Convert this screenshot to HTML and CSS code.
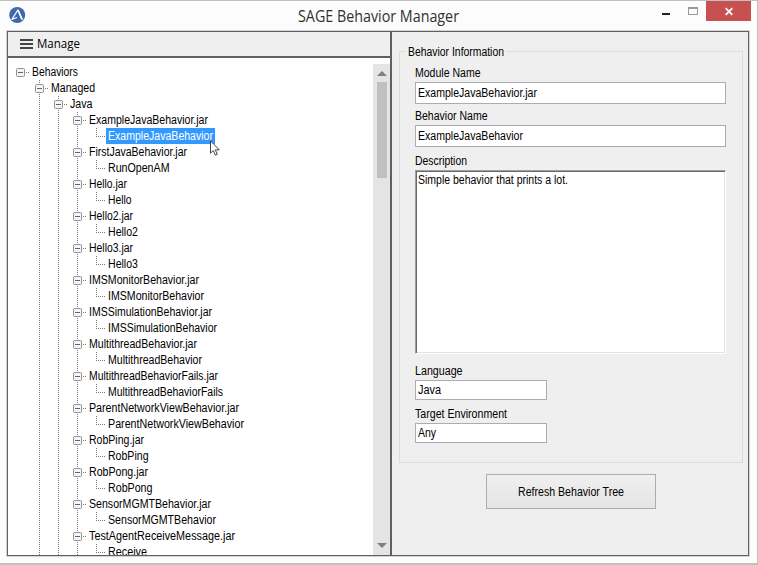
FILE: index.html
```html
<!DOCTYPE html>
<html lang="en">
<head>
<meta charset="utf-8">
<title>SAGE Behavior Manager</title>
<link rel="stylesheet" href="styles.css">
</head>
<body>
<div class="window">
  <header class="titlebar">
    <svg class="logo" width="17" height="17" viewBox="0 0 17 17"><circle cx="8.2" cy="8" r="8" fill="#3f68b0"/><path d="M2.7 12.6 8.8 3.2 13.5 12.4M2.7 12.6 8 10.4" fill="none" stroke="#fff" stroke-width="1.1"/><path d="M8.4 3h1.5l3.9 9.4h-1.8z" fill="#fff"/></svg>
    <h1 class="title"><span data-w="161">SAGE Behavior Manager</span></h1>
    <div class="controls">
      <svg width="90" height="21" viewBox="0 0 90 21"><path d="M0 13h8v2H0z" fill="#222"/><path d="M26 7h10v8H26z" fill="#999"/><path d="M27 9h8v5h-8z" fill="#fcfcfc"/><path d="M44 1h45v20H44z" fill="#c75050"/><path d="m63.7 8.2 6.6 6.6m0-6.6-6.6 6.6" stroke="#fff" stroke-width="1.8"/></svg>
    </div>
  </header>
  <main class="content">
    <section class="left">
      <div class="toolbar">
        <svg width="13" height="10" viewBox="0 0 13 10"><path d="M0 0h13v2H0zM0 4h13v2H0zM0 8h13v2H0z" fill="#444"/></svg>
        <span data-w="43">Manage</span>
      </div>
      <div class="treepane">
        <div class="tree" id="tree"></div>
        <div class="scrollbar">
          <svg width="10" height="5" viewBox="0 0 10 5"><path d="M5 0 10 5H0z" fill="#808080"/></svg>
          <div class="thumb"></div>
          <svg class="down" width="10" height="5" viewBox="0 0 10 5"><path d="M5 5 10 0H0z" fill="#808080"/></svg>
        </div>
      </div>
    </section>
    <section class="right">
      <fieldset class="group">
        <legend><span data-w="96">Behavior Information</span></legend>
        <div class="field"><label><span data-w="65.5">Module Name</span></label><div class="input"><span data-w="119">ExampleJavaBehavior.jar</span></div></div>
        <div class="field second"><label><span data-w="72.5">Behavior Name</span></label><div class="input"><span data-w="105">ExampleJavaBehavior</span></div></div>
        <div class="field desc"><label><span data-w="52">Description</span></label><div class="textarea"><span data-w="150">Simple behavior that prints a lot.</span></div></div>
        <div class="field short"><label><span data-w="47.5">Language</span></label><div class="input"><span data-w="23">Java</span></div></div>
        <div class="field short"><label><span data-w="92">Target Environment</span></label><div class="input"><span data-w="18">Any</span></div></div>
      </fieldset>
      <button class="refresh"><span data-w="106">Refresh Behavior Tree</span></button>
    </section>
  </main>
  <svg class="cursor" width="12" height="18" viewBox="0 0 12 18"><path d="M.5.8v12.4l2.8-2.6 2 4.6 2-.9-2-4.4h4z" fill="#fff" stroke="#444" stroke-width="1"/></svg>
</div>
<script src="tree.js"></script>
</body>
</html>
```
FILE: styles.css
```css
* { box-sizing: border-box; }
body { margin: 0; width: 758px; height: 565px; overflow: hidden; background: #c0c0c0; font: 12px/16px "Liberation Sans", sans-serif; color: #000; }
.window { position: relative; width: 758px; height: 564px; background: #fcfcfc; border: solid #c0c0c0; border-width: 1px 1px 1px 0; }
.titlebar { display: flex; height: 29px; }
.logo { flex: none; margin: 6px 0 0 9px; width: 17px; }
.title { flex: 1; margin: 3px 0 0 0; padding-left: 272px; font: 15.5px/24px "Open Sans", sans-serif; color: #303030; white-space: nowrap; }
.controls { flex: none; height: 21px; width: 95px; margin-top: -1px; }
.controls svg { display: block; }
.content { display: flex; width: 744px; height: 527px; margin-left: 6px; border: 1px solid #d4d4d4; }
.left, .right { border: 1px solid #606060; height: 525px; }
.left { width: 385px; border-right-width: 2px; }
.right { flex: 1; border-left: 0; background: #efefef; }
.toolbar { display: flex; align-items: center; gap: 4px; height: 26px; padding: 0 0 1px 12px; border-bottom: 2px solid #606060; background: #efefef; font: 12px/24px "Open Sans", sans-serif; }
.treepane { display: flex; height: 497px; padding-top: 6px; background: #fff; }
.tree { flex: 1; padding-left: 3px; overflow: hidden; }
.row { display: flex; height: 16px; white-space: nowrap; }
.cell { display: block; flex: none; width: 19px; height: 16px; }
.rail { background: repeating-linear-gradient(#777 0 1px, transparent 1px 2px) 9px 0 / 1px 16px no-repeat; }
.node { padding: 4px 0 0 5px; background: repeating-linear-gradient(90deg, #777 0 1px, transparent 1px 2px) 15px 8px / 4px 1px no-repeat; }
.node.joined { background: repeating-linear-gradient(90deg, #777 0 1px, transparent 1px 2px) 15px 8px / 4px 1px no-repeat, repeating-linear-gradient(#777 0 1px, transparent 1px 2px) 9px 0 / 1px 16px no-repeat; }
.node svg { display: block; }
.leaf { background: repeating-linear-gradient(90deg, #777 0 1px, transparent 1px 2px) 9px 8px / 9px 1px no-repeat, repeating-linear-gradient(#777 0 1px, transparent 1px 2px) 9px 0 / 1px 8px no-repeat; }
.name { padding: 0 2px; }
.selected { background: #3399ff; color: #fff; }
.scrollbar { display: flex; flex-direction: column; align-items: center; width: 17px; padding: 7px 0; background: #e4e4e4; }
.thumb { width: 10px; height: 96px; margin-top: 6px; background: #c0c0c0; }
.down { margin-top: auto; }
.group { width: 344px; height: 419px; margin: 12px 0 0 7px; padding: 7px 0 0 15px; border: 1px solid #dcdcdc; }
legend { height: 14px; line-height: 16px; margin-left: -9px; padding: 0 2px; }
.field { height: 43px; width: 311px; }
.field label { display: block; height: 17px; }
.input { height: 22px; padding: 2px; border: 1px solid #abadb3; background: #fff; }
.short .input { height: 20px; padding-top: 1px; }
.field.second { height: 45px; }
.field.desc { height: 210px; }
.textarea { width: 311px; height: 184px; padding: 1px 2px; border: 1px solid; border-color: #a0a0a0 #fff #fff #a0a0a0; background: #fff; box-shadow: inset 1px 1px #696969, inset -1px -1px #e3e3e3; }
.short { width: 132px; }
.refresh { display: block; width: 170px; height: 35px; margin: 11px 0 0 94px; padding: 0; border: 1px solid #acacac; background: linear-gradient(#f0f0f0, #e4e4e4); font: inherit; }
.cursor { position: absolute; left: 210px; top: 139px; }
[data-w] { display: inline-block; white-space: nowrap; transform-origin: 0 50%; }
```
FILE: tree.js
```js
// [depth, label, width in pixels]
const rows = [
  [0, "Behaviors", 46], [1, "Managed", 44], [2, "Java", 22.5],
  [3, "ExampleJavaBehavior.jar", 119], [4, "ExampleJavaBehavior", 105],
  [3, "FirstJavaBehavior.jar", 98], [4, "RunOpenAM", 61.5],
  [3, "Hello.jar", 38], [4, "Hello", 23.5],
  [3, "Hello2.jar", 44], [4, "Hello2", 30],
  [3, "Hello3.jar", 44], [4, "Hello3", 30],
  [3, "IMSMonitorBehavior.jar", 110], [4, "IMSMonitorBehavior", 96],
  [3, "IMSSimulationBehavior.jar", 123], [4, "IMSSimulationBehavior", 109],
  [3, "MultithreadBehavior.jar", 108], [4, "MultithreadBehavior", 94],
  [3, "MultithreadBehaviorFails.jar", 129], [4, "MultithreadBehaviorFails", 115],
  [3, "ParentNetworkViewBehavior.jar", 150], [4, "ParentNetworkViewBehavior", 136],
  [3, "RobPing.jar", 55], [4, "RobPing", 40.5],
  [3, "RobPong.jar", 59], [4, "RobPong", 44.5],
  [3, "SensorMGMTBehavior.jar", 122], [4, "SensorMGMTBehavior", 108],
  [3, "TestAgentReceiveMessage.jar", 146], [4, "Receive", 39]
];
const box = '<svg width="9" height="9"><rect x=".5" y=".5" width="8" height="8" rx="1" fill="#f4f4f4" stroke="#919191"/><path d="M2 4.5h5" stroke="#4b63a7"/></svg>';
document.getElementById("tree").innerHTML = rows.map(([depth, label, width], i) => {
  let cells = "";
  for (let k = 0; k < depth; k++) cells += `<span class="cell${k ? " rail" : ""}"></span>`;
  cells += depth === 4 ? '<span class="cell leaf"></span>' : `<span class="cell node${depth ? " joined" : ""}">${box}</span>`;
  return `<div class="row">${cells}<span class="name${i === 4 ? " selected" : ""}"><span data-w="${width}">${label}</span></span></div>`;
}).join("");

// Condense each label to its set width.
document.querySelectorAll("[data-w]").forEach(el => {
  const natural = el.getBoundingClientRect().width;
  el.style.transform = `scaleX(${el.dataset.w / natural})`;
  el.style.marginRight = el.dataset.w - natural + "px";
});
```
